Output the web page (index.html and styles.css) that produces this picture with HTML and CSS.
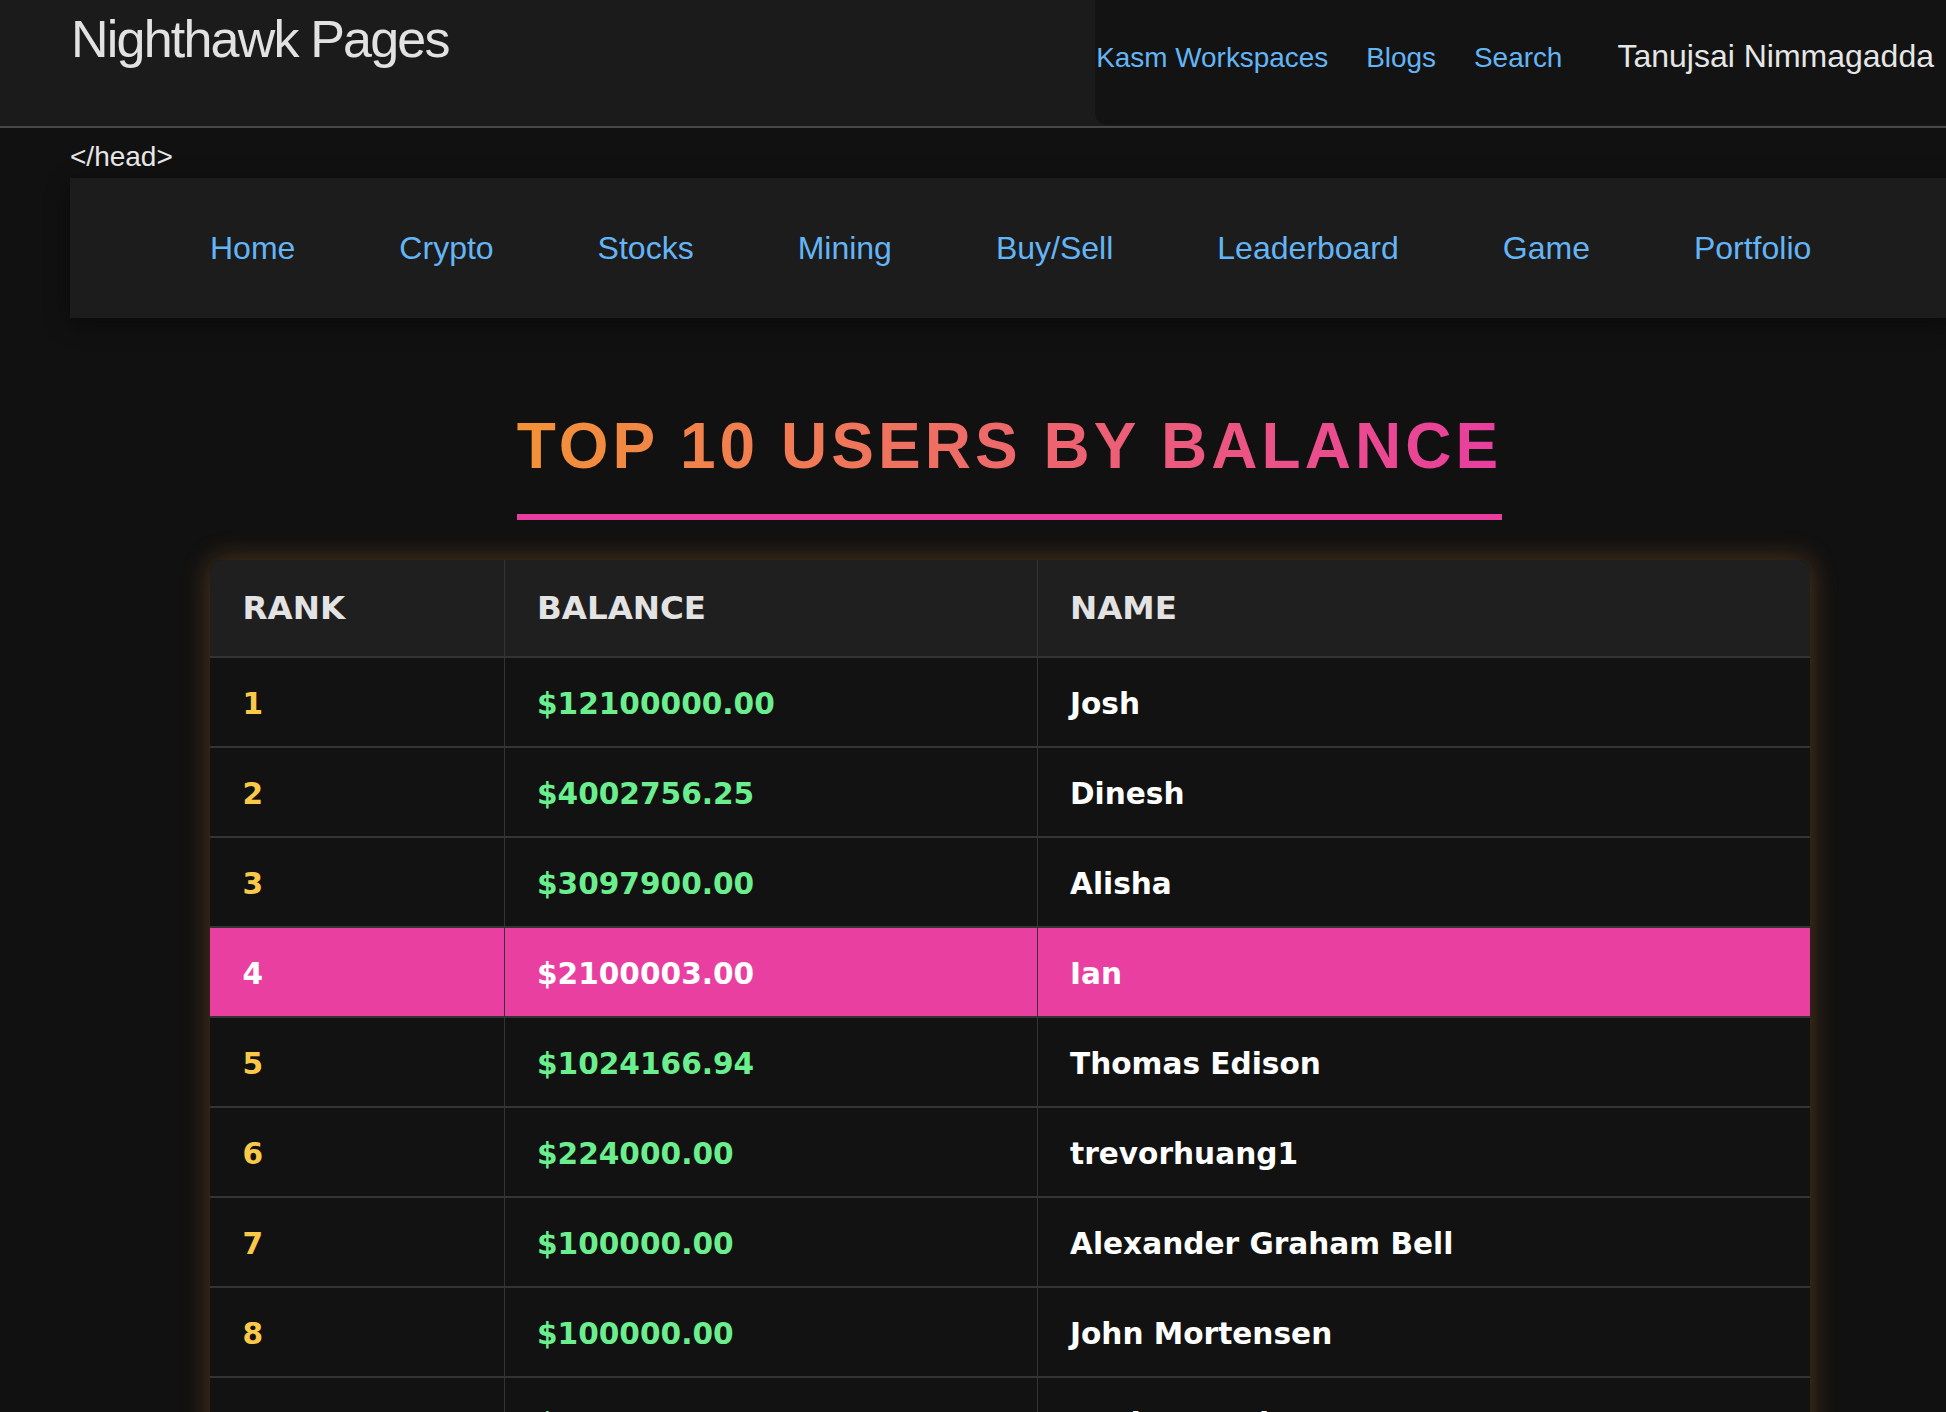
FILE: index.html
```html
<!DOCTYPE html>
<html lang="en">
<head>
<meta charset="utf-8">
<title>Leaderboard - Nighthawk Pages</title>
<link rel="stylesheet" href="styles.css">
</head>
<body>
<header class="site-header">
  <div class="brand">Nighthawk Pages</div>
  <nav class="top-links">
    <a href="#">Kasm Workspaces</a>
    <a href="#">Blogs</a>
    <a href="#">Search</a>
    <span class="user">Tanujsai Nimmagadda</span>
  </nav>
</header>
<div class="page">
  <div class="stray">&lt;/head&gt;</div>
  <nav class="main-nav">
    <a href="#">Home</a>
    <a href="#">Crypto</a>
    <a href="#">Stocks</a>
    <a href="#">Mining</a>
    <a href="#">Buy/Sell</a>
    <a href="#">Leaderboard</a>
    <a href="#">Game</a>
    <a href="#">Portfolio</a>
  </nav>
  <main class="board">
    <h1 class="board-title">TOP 10 USERS BY BALANCE</h1>
    <div class="table-card">
      <table class="leaders">
        <colgroup>
          <col class="c-rank">
          <col class="c-bal">
          <col class="c-name">
        </colgroup>
        <thead>
          <tr><th>RANK</th><th>BALANCE</th><th>NAME</th></tr>
        </thead>
        <tbody>
          <tr><td class="rank">1</td><td class="bal">$12100000.00</td><td class="name">Josh</td></tr>
          <tr><td class="rank">2</td><td class="bal">$4002756.25</td><td class="name">Dinesh</td></tr>
          <tr><td class="rank">3</td><td class="bal">$3097900.00</td><td class="name">Alisha</td></tr>
          <tr class="me"><td class="rank">4</td><td class="bal">$2100003.00</td><td class="name">Ian</td></tr>
          <tr><td class="rank">5</td><td class="bal">$1024166.94</td><td class="name">Thomas Edison</td></tr>
          <tr><td class="rank">6</td><td class="bal">$224000.00</td><td class="name">trevorhuang1</td></tr>
          <tr><td class="rank">7</td><td class="bal">$100000.00</td><td class="name">Alexander Graham Bell</td></tr>
          <tr><td class="rank">8</td><td class="bal">$100000.00</td><td class="name">John Mortensen</td></tr>
          <tr><td class="rank">9</td><td class="bal">$100000.00</td><td class="name">Madam Curie</td></tr>
          <tr><td class="rank">10</td><td class="bal">$100000.00</td><td class="name">Nikola Tesla</td></tr>
        </tbody>
      </table>
    </div>
  </main>
</div>
</body>
</html>
```
FILE: styles.css
```css
html, body {
  margin: 0;
  padding: 0;
  background: #111111;
  overflow: hidden;
}

body {
  font-family: "Liberation Sans", Arial, sans-serif;
  color: #e4e4e4;
}

/* ---------- top header ---------- */
.site-header {
  display: flex;
  height: 126px;
  background: #1b1b1b;
  border-bottom: 2px solid #474747;
}

.brand {
  padding: 9px 0 0 71px;
  font-size: 52px;
  line-height: 60px;
  letter-spacing: -1.8px;
  color: #e2e2e2;
}

.top-links {
  margin-left: auto;
  align-self: flex-start;
  box-sizing: border-box;
  height: 125px;
  display: flex;
  align-items: baseline;
  gap: 38px;
  padding: 40px 12px 0 1px;
  background: #131313;
  border-bottom-left-radius: 12px;
}

.top-links a {
  font-size: 27.9px;
  line-height: 32px;
  color: #64b5f6;
  text-decoration: none;
}

.top-links .user {
  margin-left: 17px;
  font-size: 32px;
  line-height: 32px;
  color: #e6e6e6;
}

/* ---------- page body ---------- */
.page {
  margin-left: 70px;
  width: 1879px;
}

.stray {
  font-size: 28px;
  line-height: 32px;
  padding: 13px 0 5px;
  color: #e6e6e6;
}

.main-nav {
  display: flex;
  align-items: center;
  gap: 104px;
  height: 140px;
  padding-left: 140px;
  background: #1c1c1c;
  box-shadow: 0 6px 22px rgba(0, 0, 0, 0.45);
}

.main-nav a {
  font-size: 32px;
  line-height: 37px;
  color: #64b5f6;
  text-decoration: none;
}

/* ---------- leaderboard ---------- */
.board {
  padding-top: 91px;
}

.board-title {
  width: fit-content;
  margin: 0 auto;
  font-size: 64px;
  line-height: 74px;
  font-weight: 700;
  letter-spacing: 0.063em;
  padding-bottom: 31px;
  border-bottom: 6px solid #e83e9f;
  background: linear-gradient(90deg, #f39237 0%, #e83e9f 100%);
  -webkit-background-clip: text;
  background-clip: text;
  color: transparent;
}

.table-card {
  width: 1600px;
  margin: 40px auto 0;
  border-radius: 12px;
  overflow: hidden;
  background: #121212;
  box-shadow: 0 0 28px rgba(243, 146, 55, 0.3);
}

.leaders {
  width: 100%;
  border-collapse: collapse;
  table-layout: fixed;
  font-family: "DejaVu Sans", Verdana, sans-serif;
  font-weight: 700;
  text-align: left;
}

.c-rank { width: 295px; }
.c-bal { width: 533px; }
.c-name { width: 772px; }

.leaders th {
  background: #1f1f1f;
  color: #e3e3e3;
  font-size: 32.5px;
  line-height: 36px;
  font-weight: 700;
  padding: 30px 32px 30px;
  border-bottom: 2px solid #343434;
  border-right: 1px solid #343434;
}

.leaders td {
  font-size: 29.6px;
  line-height: 36px;
  padding: 28px 32px 24px;
  border-bottom: 2px solid #343434;
  border-right: 1px solid #343434;
}

.leaders th:first-child,
.leaders td:first-child {
  padding-left: 33px;
}

.leaders th:last-child,
.leaders td:last-child {
  border-right: none;
}

.leaders .rank { color: #fbc94a; }
.leaders .bal { color: #6bef8e; }
.leaders .name { color: #ffffff; }

.leaders tr.me td {
  background: #e93fa0;
  color: #ffffff;
}
```
